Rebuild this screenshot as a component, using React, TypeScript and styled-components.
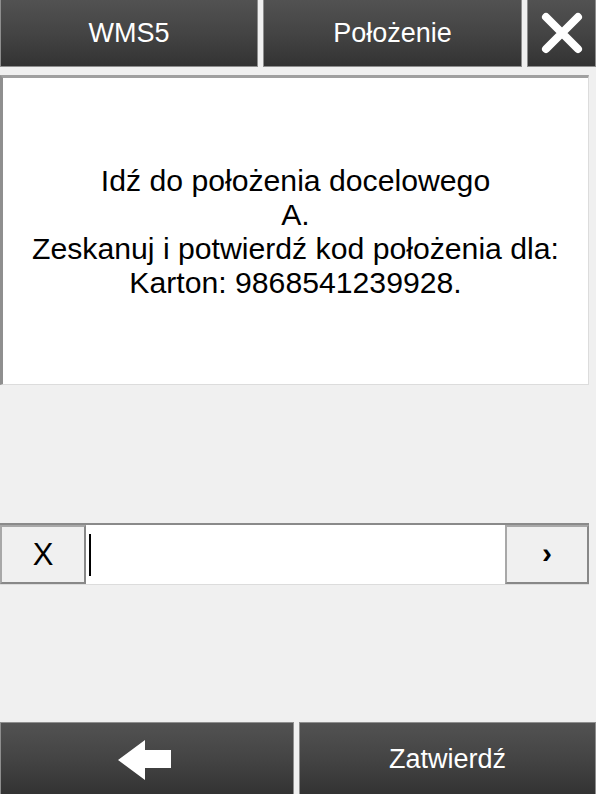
import React from "react";
import styled, { createGlobalStyle } from "styled-components";

const Global = createGlobalStyle`
  html, body { margin: 0; padding: 0; background: #f0f0f0; }
  body { font-family: "Liberation Sans", Arial, sans-serif; }
`;

const Screen = styled.div`
  width: 596px;
  height: 794px;
  display: flex;
  flex-direction: column;
  background: #f0f0f0;
  overflow: hidden;
`;

const Header = styled.div`
  display: grid;
  grid-template-columns: 258px 259px 69px;
  column-gap: 5px;
  height: 67px;
  flex: none;
`;

const DarkButton = styled.div`
  display: flex;
  align-items: center;
  justify-content: center;
  background: linear-gradient(to bottom, #525252 0%, #444444 50%, #333333 100%);
  border: 1px solid #8e8e8e;
  border-top: none;
  box-sizing: border-box;
  color: #ffffff;
  font-size: 27px;
  font-family: "Liberation Sans", Arial, sans-serif;
`;

const MessageBox = styled.div`
  margin-top: 8px;
  width: 589px;
  height: 310px;
  box-sizing: border-box;
  background: #ffffff;
  border-top: 3px solid #a0a0a0;
  border-left: 3px solid #8f8f8f;
  border-right: 1px solid #dcdcdc;
  border-bottom: 1px solid #dcdcdc;
  display: flex;
  align-items: center;
  justify-content: center;
  flex: none;
`;

const Message = styled.div`
  text-align: center;
  font-size: 30.2px;
  line-height: 34px;
  color: #000;
  padding-top: 2px;
`;

const InputRow = styled.div`
  margin-top: 138px;
  width: 589px;
  height: 62px;
  box-sizing: border-box;
  display: flex;
  flex: none;
  border-top: 2px solid #8a8a8a;
  border-bottom: 1px solid #dcdcdc;
  background: #ffffff;
`;

const LightButton = styled.div<{ $w: number }>`
  width: ${(p) => p.$w}px;
  flex: none;
  box-sizing: border-box;
  background: #f0f0f0;
  border: 2px solid #888888;
  border-top-color: #a8a8a8;
  border-left-color: #a8a8a8;
  display: flex;
  align-items: center;
  justify-content: center;
  font-size: 31px;
  color: #000;
`;

const Field = styled.div`
  flex: 1;
  display: flex;
  align-items: center;
  padding-left: 3px;
`;

const Caret = styled.div`
  width: 2px;
  height: 42px;
  background: #000;
`;

const Chevron = styled.span`
  font-weight: bold;
  font-size: 30px;
  line-height: 1;
  margin-top: -4px;
`;

const Footer = styled.div`
  margin-top: auto;
  height: 72px;
  display: grid;
  grid-template-columns: 294px 297px;
  column-gap: 5px;
  flex: none;
`;

const FooterButton = styled(DarkButton)`
  border-top: 1px solid #8e8e8e;
  border-bottom: none;
  padding-top: 2px;
`;

const BackIcon = styled.svg`
  margin-right: 6px;
`;

export default function App() {
  return (
    <>
      <Global />
      <Screen>
        <Header>
          <DarkButton>WMS5</DarkButton>
          <DarkButton>Położenie</DarkButton>
          <DarkButton>
            <svg width="42" height="42" viewBox="0 0 42 42">
              <path d="M5 5 L37 37 M37 5 L5 37" stroke="#fff" strokeWidth="8" strokeLinecap="round" />
            </svg>
          </DarkButton>
        </Header>
        <MessageBox>
          <Message>
            Idź do położenia docelowego
            <br />
            A.
            <br />
            Zeskanuj i potwierdź kod położenia dla:
            <br />
            Karton: 9868541239928.
          </Message>
        </MessageBox>
        <InputRow>
          <LightButton $w={86}>X</LightButton>
          <Field>
            <Caret />
          </Field>
          <LightButton $w={84}>
            <Chevron>›</Chevron>
          </LightButton>
        </InputRow>
        <Footer>
          <FooterButton>
            <BackIcon width="54" height="42" viewBox="0 0 54 42">
              <path d="M1 21 L28 1 L28 11 L54 11 L54 29 L28 29 L28 41 Z" fill="#fff" />
            </BackIcon>
          </FooterButton>
          <FooterButton>Zatwierdź</FooterButton>
        </Footer>
      </Screen>
    </>
  );
}
